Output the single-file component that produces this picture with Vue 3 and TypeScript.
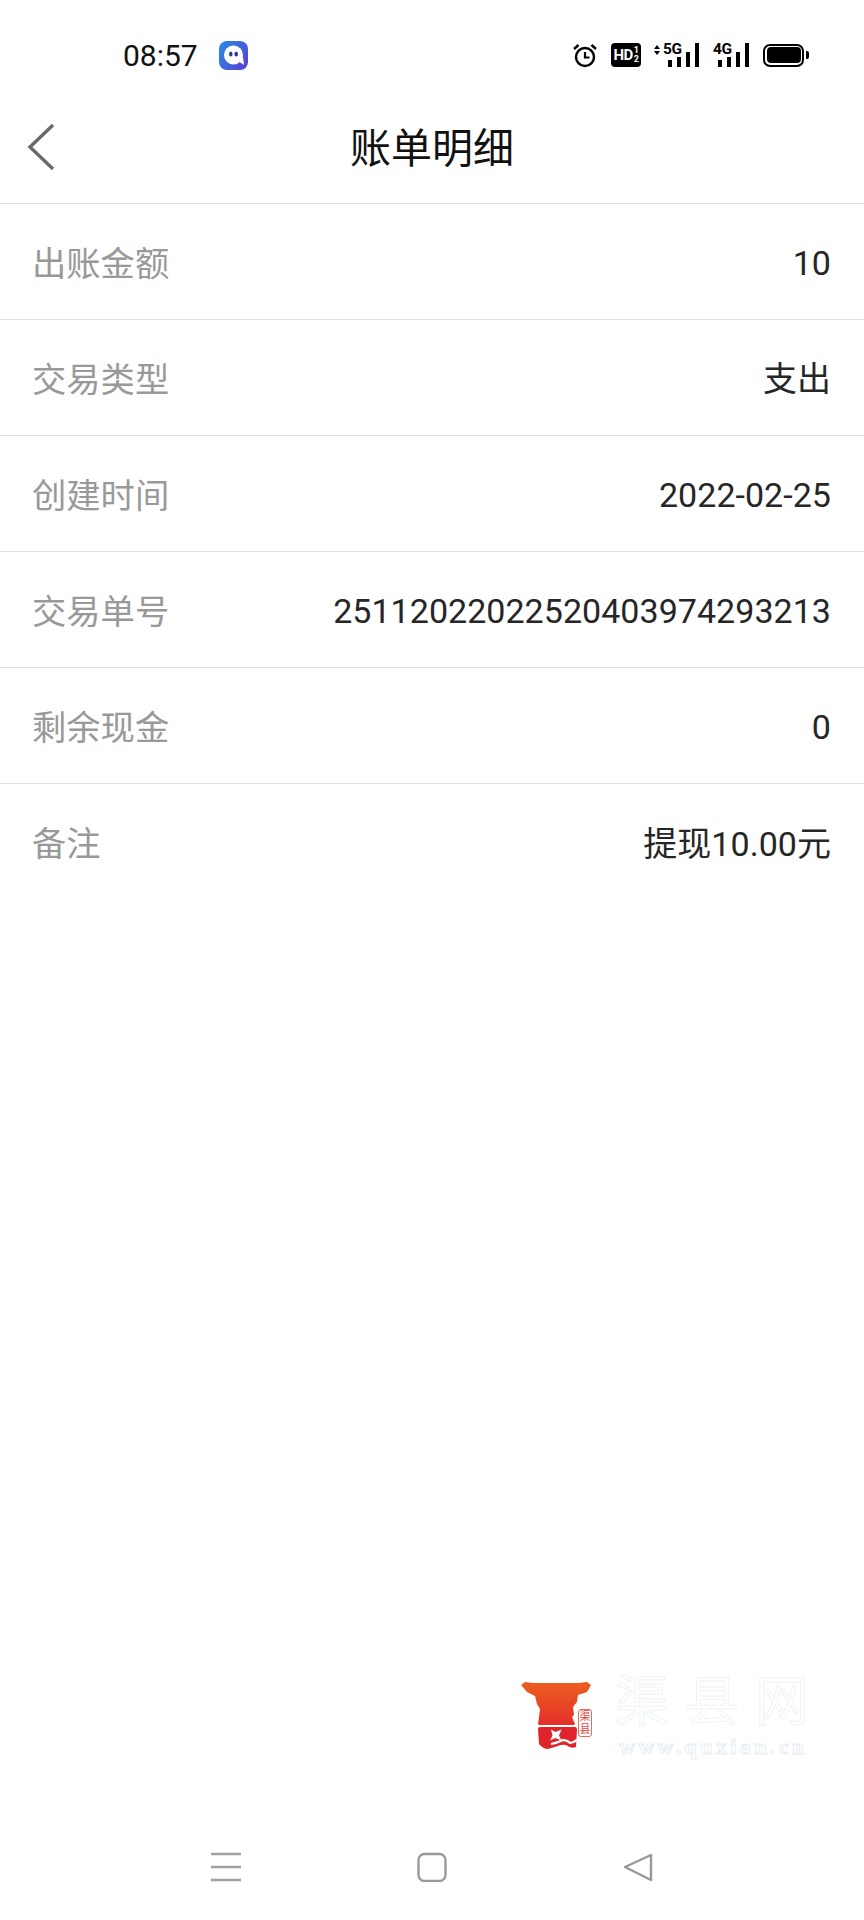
<script setup lang="ts">
const rows: Array<{ label: string; value: string }> = [
  { label: '出账金额', value: '10' },
  { label: '交易类型', value: '支出' },
  { label: '创建时间', value: '2022-02-25' },
  { label: '交易单号', value: '25112022022520403974293213' },
  { label: '剩余现金', value: '0' },
  { label: '备注', value: '提现10.00元' }
]
</script>

<template>
  <div class="page">
    <!-- status bar -->
    <div class="status">
      <div class="status-left">
        <span class="time">08:57</span>
        <svg class="app-icon" width="29" height="29" viewBox="0 0 29 29">
          <defs>
            <linearGradient id="qq" x1="0" y1="0.2" x2="1" y2="0.9">
              <stop offset="0" stop-color="#2a86e6" />
              <stop offset="1" stop-color="#5a40d2" />
            </linearGradient>
          </defs>
          <rect width="29" height="29" rx="8" fill="url(#qq)" />
          <circle cx="14.500" cy="14" r="9.500" fill="#fff" />
          <path d="M19 20l6 4-1-8z" fill="#fff" />
          <ellipse cx="11.800" cy="13" rx="1.800" ry="2.500" fill="#2c3c90" />
          <ellipse cx="17.200" cy="13" rx="1.800" ry="2.500" fill="#2c3c90" />
        </svg>
      </div>
      <div class="status-right">
        <svg width="26" height="26" viewBox="0 0 26 26" fill="none" stroke="#000">
          <circle cx="13" cy="15" r="9" stroke-width="2.400" />
          <path d="M13 10v5.500h4.500" stroke-width="2.200" />
          <path d="M2 7l4.500-4M24 7l-4.500-4" stroke-width="2.400" />
        </svg>
        <div class="hd">HD<span class="hd-sub"><i>1</i><i>2</i></span></div>
        <div class="net net-5g">
          <svg class="arrows" width="6" height="10" viewBox="0 0 6 10" fill="#000">
            <path d="M3 0l3 4H0zM3 10L0 6h6z" />
          </svg>
          <span class="net-label">5G</span>
          <div class="bars">
            <i class="b1"></i><i class="b2"></i><i class="b3"></i><i class="b4"></i>
          </div>
        </div>
        <div class="net net-4g">
          <span class="net-label">4G</span>
          <div class="bars">
            <i class="b1"></i><i class="b2"></i><i class="b3"></i><i class="b4"></i>
          </div>
        </div>
        <div class="battery">
          <div class="battery-body"><div class="battery-fill"></div></div>
          <div class="battery-tip"></div>
        </div>
      </div>
    </div>

    <!-- header -->
    <div class="header">
      <svg class="back" width="28" height="48" viewBox="0 0 28 48" fill="none">
        <path d="M26 2L3 24l23 22" stroke="#6a6a6a" stroke-width="3.400" />
      </svg>
      <span class="title">账单明细</span>
    </div>

    <!-- rows -->
    <div class="rows">
      <div v-for="row in rows" :key="row.label" class="row">
        <span class="label">{{ row.label }}</span>
        <span class="value">{{ row.value }}</span>
      </div>
    </div>

    <div class="spacer"></div>

    <!-- watermark -->
    <div class="mark">
      <svg width="85" height="85" viewBox="0 0 85 85">
        <defs>
          <linearGradient id="top" x1="0" y1="0" x2="0" y2="1">
            <stop offset="0" stop-color="#ec5f20" />
            <stop offset="1" stop-color="#e4302a" />
          </linearGradient>
        </defs>
        <path d="M6 13l4-3 8 1h45l9-1 4 3-4 7-9 3-1 7-4 5 1 8-2 2 3 7-1 1H24l-1-1 1-7 1-8-3-5-2-8-8-4z" fill="url(#top)" />
        <path d="M23 57q0-2 2-2h35q2 0 2 2l-1 18q-5 2-10-2-4-1-8 1l-10 3q-5 0-9-5z" fill="#e0242b" />
        <path d="M36 57.500l4.500 2.500 6-2.500-2.500 6 2.500 5-6-2.500-5.500 2.500 2.500-5z" fill="#fff" />
        <path d="M36 72q6-1 12-4 4 0 7 3 3 0 7-3" fill="none" stroke="#fff" stroke-width="2.200" />
      </svg>
      <div class="seal"><span>渠</span><span>县</span></div>
      <div class="mark-text">
        <div class="mark-cn">渠县网</div>
        <div class="mark-url">www.quxian.cn</div>
      </div>
    </div>

    <!-- nav bar -->
    <div class="nav">
      <svg width="30" height="30" viewBox="0 0 30 30" fill="none" stroke="#a0a0a0" stroke-width="2.600">
        <path d="M0 2h30M0 15h30M0 28h30" />
      </svg>
      <svg width="30" height="30" viewBox="0 0 30 30" fill="none" stroke="#999" stroke-width="2.400">
        <rect x="1.500" y="2" width="27" height="27" rx="6" />
      </svg>
      <svg width="30" height="30" viewBox="0 0 30 30" fill="none" stroke="#999" stroke-width="2.400" stroke-linejoin="round">
        <path d="M28 3v25L2 15z" />
      </svg>
    </div>
  </div>
</template>

<style scoped>
.page {
  width: 864px;
  height: 1920px;
  background: #fff;
  display: flex;
  flex-direction: column;
  font-family: Roboto, "Noto Sans CJK SC", sans-serif;
  overflow: hidden;
  position: relative;
}

.status {
  height: 86px;
  flex-shrink: 0;
  padding: 24px 55px 0 123px;
  display: flex;
  align-items: center;
  justify-content: space-between;
  box-sizing: border-box;
}

.status-left {
  display: flex;
  align-items: center;
  gap: 21px;
}

.time {
  font-size: 30px;
  color: #111;
}

.status-right {
  display: flex;
  align-items: center;
  gap: 13px;
}

.hd {
  width: 30px;
  height: 24px;
  background: #000;
  border-radius: 4px;
  color: #fff;
  font-size: 15px;
  font-weight: 700;
  letter-spacing: -0.5px;
  display: flex;
  align-items: center;
  justify-content: center;
}

.hd-sub {
  display: flex;
  flex-direction: column;
  margin-left: 1px;
}

.hd-sub i {
  font-style: normal;
  font-size: 9px;
  line-height: 9px;
}

.net {
  display: flex;
  align-items: flex-end;
  height: 24px;
  position: relative;
}

.net-5g {
  width: 44px;
  padding-left: 14px;
  box-sizing: border-box;
}

.net-4g {
  width: 35px;
  padding-left: 5px;
  box-sizing: border-box;
  margin-left: 2px;
}

.arrows {
  position: absolute;
  left: 0;
  top: 2px;
}

.net-label {
  position: absolute;
  top: 0;
  font-size: 15.500px;
  font-weight: 700;
  line-height: 12px;
  letter-spacing: -0.5px;
  color: #000;
}

.net-5g .net-label {
  left: 9px;
}

.net-4g .net-label {
  left: 0;
}

.bars {
  display: flex;
  align-items: flex-end;
  gap: 5px;
}

.bars i {
  display: block;
  width: 4px;
  background: #000;
}

.bars .b1 { height: 7px; }
.bars .b2 { height: 10px; }
.bars .b3 { height: 15px; }
.bars .b4 { height: 24px; }

.battery {
  display: flex;
  align-items: center;
  gap: 2px;
  margin-left: 2px;
}

.battery-body {
  width: 41px;
  height: 23px;
  border: 2.500px solid #000;
  border-radius: 7px;
  padding: 1.500px;
  box-sizing: border-box;
}

.battery-fill {
  height: 100%;
  background: #000;
  border-radius: 4px;
}

.battery-tip {
  width: 3px;
  height: 8px;
  background: #000;
  border-radius: 0 2px 2px 0;
}

.header {
  height: 118px;
  flex-shrink: 0;
  display: flex;
  align-items: center;
  justify-content: center;
  border-bottom: 1px solid #e0e0e0;
  position: relative;
  box-sizing: border-box;
}

.back {
  position: absolute;
  left: 27px;
  top: 37px;
}

.title {
  font-size: 41px;
  color: #111;
}

.row {
  height: 116px;
  box-sizing: border-box;
  padding: 0 33px 0 32px;
  display: flex;
  align-items: center;
  justify-content: space-between;
  border-bottom: 1px solid #e0e0e0;
}

.row:last-child {
  border-bottom: none;
}

.label {
  font-size: 34.300px;
  line-height: 40px;
  color: #999;
  padding-top: 4px;
}

.value {
  font-size: 34px;
  line-height: 40px;
  letter-spacing: 0.04px;
  color: #262626;
  padding-top: 3px;
}

.spacer {
  flex: 1;
}

.mark {
  position: absolute;
  left: 515px;
  top: 1672px;
  display: flex;
  align-items: flex-start;
}

.seal {
  position: absolute;
  left: 63px;
  top: 37px;
  width: 14px;
  height: 28px;
  box-sizing: border-box;
  border: 1px solid #e56a60;
  border-radius: 3px;
  color: #d9483f;
  font-size: 11px;
  line-height: 13px;
  display: flex;
  flex-direction: column;
  align-items: center;
  background: #fff;
}

.mark-text {
  margin-left: 15px;
  color: #fff;
}

.mark-cn {
  font-size: 54px;
  line-height: 58px;
  letter-spacing: 16px;
  margin-top: 2px;
  -webkit-text-stroke: 1px #edf3f7;
}

.mark-url {
  font-family: "Liberation Serif", serif;
  font-size: 22px;
  line-height: 24px;
  letter-spacing: 3.400px;
  font-weight: 700;
  margin: 3px 0 0 4px;
  white-space: nowrap;
  -webkit-text-stroke: 1px #e8eef3;
}

.nav {
  height: 68px;
  flex-shrink: 0;
  padding: 0 211px;
  display: flex;
  align-items: flex-start;
  justify-content: space-between;
  box-sizing: border-box;
}
</style>

<style>
body {
  margin: 0;
  background: #fff;
}
</style>
